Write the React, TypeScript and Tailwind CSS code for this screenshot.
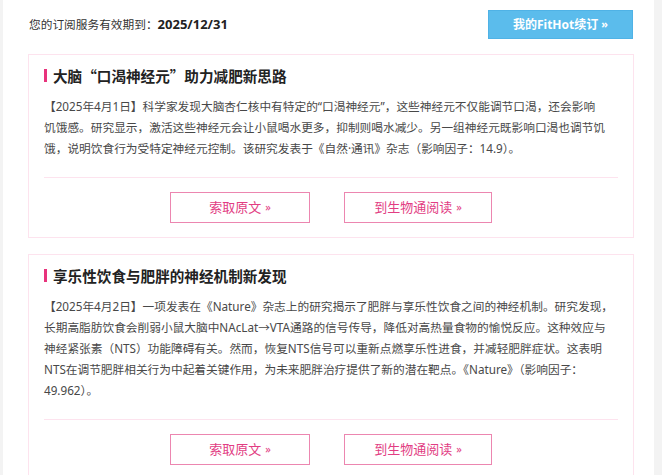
import React from 'react';

type Article = {
  title: string;
  lines: string[];
};

const articles: Article[] = [
  {
    title: '大脑“口渴神经元”助力减肥新思路',
    lines: [
      '【2025年4月1日】科学家发现大脑杏仁核中有特定的“口渴神经元”，这些神经元不仅能调节口渴，还会影响',
      '饥饿感。研究显示，激活这些神经元会让小鼠喝水更多，抑制则喝水减少。另一组神经元既影响口渴也调节饥',
      '饿，说明饮食行为受特定神经元控制。该研究发表于《自然·通讯》杂志（影响因子：14.9）。',
    ],
  },
  {
    title: '享乐性饮食与肥胖的神经机制新发现',
    lines: [
      '【2025年4月2日】一项发表在《Nature》杂志上的研究揭示了肥胖与享乐性饮食之间的神经机制。研究发现，',
      '长期高脂肪饮食会削弱小鼠大脑中NAcLat→VTA通路的信号传导，降低对高热量食物的愉悦反应。这种效应与',
      '神经紧张素（NTS）功能障碍有关。然而，恢复NTS信号可以重新点燃享乐性进食，并减轻肥胖症状。这表明',
      'NTS在调节肥胖相关行为中起着关键作用，为未来肥胖治疗提供了新的潜在靶点。《Nature》（影响因子：',
      '49.962）。',
    ],
  },
];

function PinkButton({ label, width }: { label: string; width: string }) {
  return (
    <button
      type="button"
      className={`${width} h-[31px] border border-[#ec86b0] bg-white text-[13px] text-[#e23d83] flex items-center justify-center gap-1`}
    >
      <span>{label}</span>
      <span className="text-[11px]">»</span>
    </button>
  );
}

function ArticleCard({ a }: { a: Article }) {
  return (
    <div className="border border-[#fde3ee] bg-white px-[15px] pt-[10px] pb-[14px]">
      {/* title */}
      <div className="flex items-center gap-[6px] h-[21px]">
        <span className="w-[3px] h-[13px] bg-[#e8337c]" />
        <h2 className="font-['Noto_Sans_CJK_SC',sans-serif] text-[14.6px] font-bold text-[#222] leading-[21px]">
          {a.title}
        </h2>
      </div>
      {/* body */}
      <div className="mt-[10px] text-[11.7px] leading-[21px] text-[#484848] whitespace-nowrap">
        {a.lines.map((l, i) => (
          <div key={i}>{l}</div>
        ))}
      </div>
      <div className="mt-[18px] h-px bg-[#fde3ee]" />
      <div className="mt-[14px] flex justify-center gap-[34px]">
        <PinkButton label="索取原文" width="w-[140px]" />
        <PinkButton label="到生物通阅读" width="w-[148px]" />
      </div>
    </div>
  );
}

export default function App() {
  return (
    <div className="min-h-screen bg-[#f3f3f3] font-['Noto_Sans','Noto_Sans_CJK_SC',sans-serif]">
      <div className="ml-[3px] w-[651px] min-h-screen bg-white pl-[25px] pr-[20px]">
        {/* header */}
        <div className="flex items-center justify-between pt-[10px] pb-[15px]">
          <div className="pl-[1px] text-[11.7px] text-[#333]">
            您的订阅服务有效期到：<span className="font-bold text-[13px] text-[#222]">2025/12/31</span>
          </div>
          <button
            type="button"
            className="mr-[1px] w-[145px] h-[29px] bg-[#5bbcec] border border-[#4fb2e6] text-white text-[12px] font-bold flex items-center justify-center gap-[3px]"
          >
            <span>我的FitHot续订</span>
            <span className="text-[11px]">»</span>
          </button>
        </div>
        <div className="flex flex-col gap-[16px]">
          {articles.map((a, i) => (
            <ArticleCard key={i} a={a} />
          ))}
        </div>
      </div>
    </div>
  );
}
